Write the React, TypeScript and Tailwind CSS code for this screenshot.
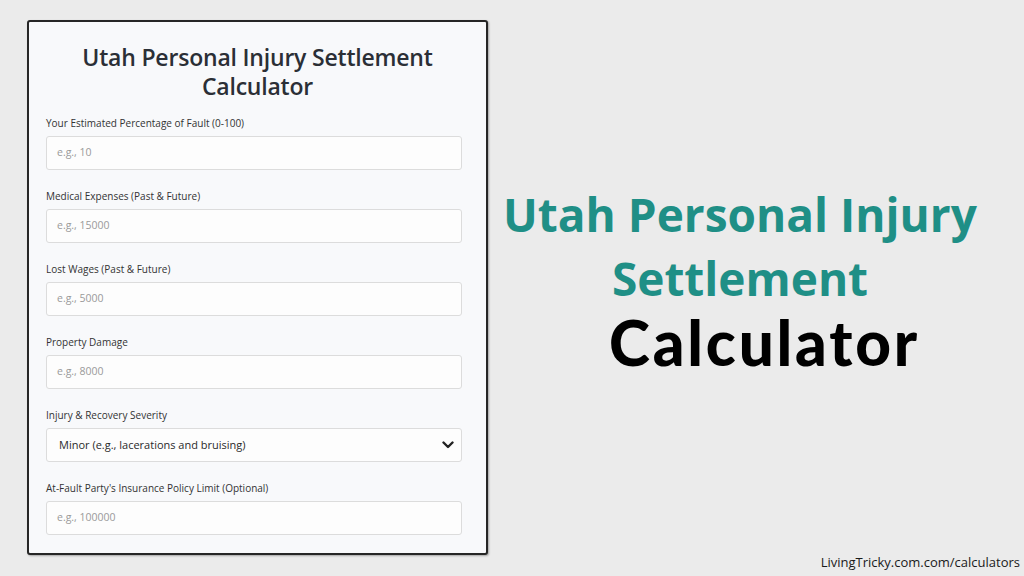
import React from "react";

const fields: { label: string; placeholder?: string; select?: string }[] = [
  { label: "Your Estimated Percentage of Fault (0-100)", placeholder: "e.g., 10" },
  { label: "Medical Expenses (Past & Future)", placeholder: "e.g., 15000" },
  { label: "Lost Wages (Past & Future)", placeholder: "e.g., 5000" },
  { label: "Property Damage", placeholder: "e.g., 8000" },
  { label: "Injury & Recovery Severity", select: "Minor (e.g., lacerations and bruising)" },
  { label: "At-Fault Party's Insurance Policy Limit (Optional)", placeholder: "e.g., 100000" },
];

export default function App() {
  return (
    <div
      className="w-[1024px] h-[576px] bg-[#ebebeb] relative overflow-hidden flex"
      style={{ fontFamily: '"Open Sans", "Noto Sans", sans-serif' }}
    >
      <div className="ml-[27px] mt-[20px] w-[461px] h-[535px] border-2 border-[#262626] rounded-[3px] bg-[#f8f9fb] shadow-[1px_1px_2px_rgba(0,0,0,0.3)] flex flex-col px-[17px]">
        <h1 className="text-center text-[23px] leading-[29px] font-semibold text-[#2b2f36] mt-[21px] tracking-[-0.2px]">
          Utah Personal Injury Settlement
          <br />
          Calculator
        </h1>
        <div className="flex flex-col mt-[15px] gap-[19px]">
          {fields.map((f) => (
            <div key={f.label} className="flex flex-col">
              <div className="text-[10px] leading-[14px] text-[#333] h-[14px]">{f.label}</div>
              <div className="mt-[6px] h-[34px] w-[416px] border border-[#dcdcdc] rounded-[3px] bg-[#fdfdfd] flex items-center">
                {f.select ? (
                  <div className="flex items-center justify-between w-full pl-[12px] pr-[7px]">
                    <span className="text-[11px] text-[#2a2a2a]">{f.select}</span>
                    <svg width="12" height="8" viewBox="0 0 12 8">
                      <path d="M1.5 1.5 L6 6 L10.5 1.5" fill="none" stroke="#222" strokeWidth="2.4" strokeLinecap="round" strokeLinejoin="round" />
                    </svg>
                  </div>
                ) : (
                  <span className="pl-[10px] text-[10.5px] text-[#9a9a9a]">{f.placeholder}</span>
                )}
              </div>
            </div>
          ))}
        </div>
      </div>

      <div className="w-[500px] flex flex-col items-center pt-[182px] ml-[2px]">
        <div className="flex flex-col items-start">
          <div className="self-center text-[46px] leading-[64px] font-bold text-[#1f8f86] text-center whitespace-nowrap">
            Utah Personal Injury
          </div>
          <div className="self-center text-[46px] leading-[64px] font-bold text-[#1f8f86] text-center whitespace-nowrap">
            Settlement
          </div>
          <div
            className="ml-[106px] text-[62px] leading-[64px] font-black text-black tracking-[2.8px] whitespace-nowrap"
            style={{ fontFamily: 'Lato, sans-serif' }}
          >
            Calculator
          </div>
        </div>
      </div>

      <div className="absolute right-[4px] bottom-[4px] text-[13px] text-[#1a1a1a]">
        LivingTricky.com.com/calculators
      </div>
    </div>
  );
}
